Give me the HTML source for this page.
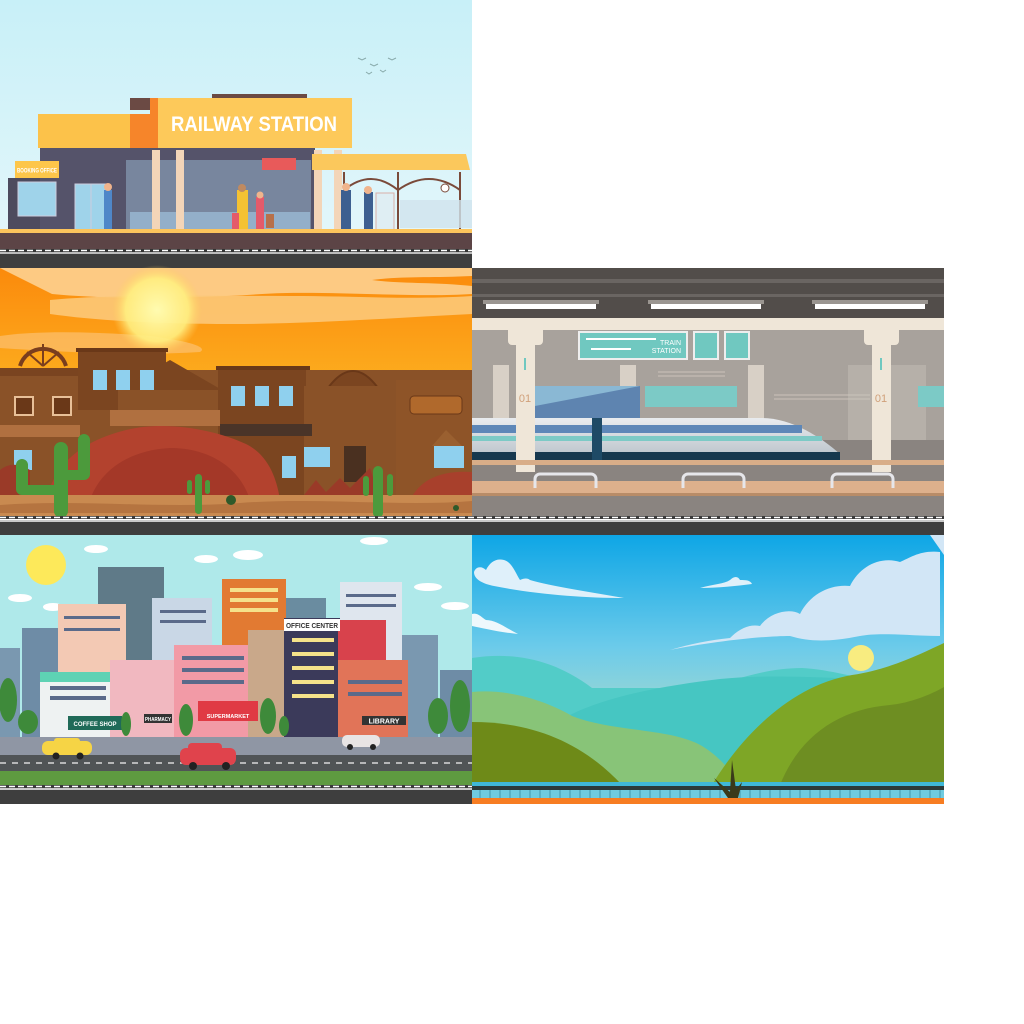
<!DOCTYPE html>
<html><head><meta charset="utf-8"><style>html,body{margin:0;padding:0;background:#fff;width:1024px;height:1024px;overflow:hidden}svg{display:block}</style></head><body>
<svg width="1024" height="1024" viewBox="0 0 1024 1024" xmlns="http://www.w3.org/2000/svg">
<defs>
<linearGradient id="s1" x1="0" y1="0" x2="0" y2="1"><stop offset="0" stop-color="#c8f0f8"/><stop offset="1" stop-color="#e2f6fa"/></linearGradient>
<linearGradient id="s2" x1="0" y1="0" x2="0" y2="1"><stop offset="0" stop-color="#fb8a0c"/><stop offset="0.5" stop-color="#fdb020"/><stop offset="1" stop-color="#ffd030"/></linearGradient>
<radialGradient id="sun2" cx="0.5" cy="0.5" r="0.5"><stop offset="0" stop-color="#fffbb0"/><stop offset="0.7" stop-color="#ffef80" stop-opacity="0.9"/><stop offset="1" stop-color="#ffd060" stop-opacity="0"/></radialGradient>
<linearGradient id="s5" x1="0" y1="0" x2="0" y2="1"><stop offset="0" stop-color="#0ea6e6"/><stop offset="0.45" stop-color="#6ccbea"/><stop offset="1" stop-color="#d2e6b8"/></linearGradient>
<linearGradient id="tr" x1="0" y1="0" x2="0" y2="1"><stop offset="0" stop-color="#e9ecef"/><stop offset="1" stop-color="#b7c0c8"/></linearGradient>
</defs>

<!-- PANEL 1 -->
<rect x="0" y="0" width="472" height="232" fill="url(#s1)"/>
<g fill="none" stroke="#8aa" stroke-width="1"><path d="M358 58l4 2 4-2M370 64l4 2 4-2M380 70l3 2 3-2M388 58l4 2 4-2M366 72l3 2 3-2"/></g>
<rect x="8" y="178" width="50" height="52" fill="#4d4b5e"/>
<rect x="40" y="146" width="275" height="85" fill="#55536a"/>
<rect x="126" y="160" width="185" height="70" fill="#7c8ca4" opacity="0.9"/>
<rect x="130" y="212" width="180" height="18" fill="#9ec0dc" opacity="0.7"/>
<rect x="18" y="182" width="38" height="34" fill="#9fd3ea" stroke="#ccd" stroke-width="1"/>
<rect x="15" y="161" width="44" height="17" fill="#fdc64a"/>
<text x="37" y="172.5" font-family="Liberation Sans" font-size="6.5" font-weight="bold" fill="#fff" text-anchor="middle" textLength="40" lengthAdjust="spacingAndGlyphs">BOOKING OFFICE</text>
<rect x="75" y="184" width="32" height="46" fill="#9fd3ea" stroke="#ccd"/>
<line x1="91" y1="184" x2="91" y2="230" stroke="#ccd"/>
<rect x="130" y="98" width="25" height="12" fill="#6b4a44"/>
<rect x="212" y="94" width="95" height="6" fill="#6b4a44"/>
<rect x="38" y="114" width="122" height="34" fill="#fcc24a"/>
<rect x="130" y="114" width="25" height="34" fill="#f6852a"/>
<rect x="150" y="98" width="202" height="50" fill="#fdc95a"/>
<rect x="150" y="98" width="8" height="50" fill="#f6852a"/>
<text x="254" y="131" font-family="Liberation Sans" font-size="21" font-weight="bold" fill="#fff" text-anchor="middle" textLength="166" lengthAdjust="spacingAndGlyphs">RAILWAY STATION</text>
<rect x="262" y="158" width="34" height="12" fill="#e85a5a"/>
<g fill="#f3d5b8"><rect x="152" y="150" width="8" height="80"/><rect x="176" y="150" width="8" height="80"/><rect x="314" y="150" width="8" height="80"/><rect x="334" y="150" width="8" height="80"/></g>
<path d="M312 154h154l4 16H312z" fill="#fbc85c"/>
<g fill="none" stroke="#7a4a3a" stroke-width="2"><path d="M344 172v58M398 172v58M460 172v58M344 190q27-22 54 0M398 190q31-22 62 0"/></g>
<rect x="400" y="200" width="72" height="28" fill="#cfe3ee" opacity="0.8"/>
<rect x="376" y="193" width="18" height="37" fill="#dfeef3" stroke="#d8b0a8"/>
<circle cx="445" cy="188" r="4" fill="#fff" stroke="#7a4a3a"/>
<g><rect x="104" y="190" width="8" height="40" fill="#4f87c8"/><circle cx="108" cy="187" r="4" fill="#f0b48c"/>
<rect x="237" y="190" width="11" height="40" fill="#f4c233"/><circle cx="242" cy="188" r="4" fill="#c08a60"/>
<rect x="256" y="197" width="8" height="33" fill="#e45a6a"/><circle cx="260" cy="195" r="3.5" fill="#f0b48c"/>
<rect x="232" y="213" width="7" height="17" fill="#e45a6a"/><rect x="266" y="214" width="8" height="14" fill="#b7704a"/>
<rect x="341" y="190" width="10" height="40" fill="#3d5f90"/><circle cx="346" cy="187" r="4" fill="#f0b48c"/>
<rect x="364" y="192" width="9" height="38" fill="#3d5f90"/><circle cx="368" cy="190" r="4" fill="#f0b48c"/></g>
<rect x="0" y="229" width="472" height="4" fill="#fcc45c"/>
<rect x="0" y="233" width="472" height="16" fill="#5c4446"/>
<rect x="0" y="249" width="472" height="3" fill="#333"/>
<line x1="0" y1="250.5" x2="472" y2="250.5" stroke="#fff" stroke-width="1.5" stroke-dasharray="6 3"/>
<rect x="0" y="252" width="472" height="2" fill="#bbb"/>
<rect x="0" y="254" width="472" height="14" fill="#3e3e3e"/>

<!-- PANEL 2 -->
<rect x="0" y="268" width="472" height="250" fill="url(#s2)"/>
<path d="M0 268h472v8c-40 2-70 0-100 4 30 4 60 2 100 6v8c-60 4-150-4-210 0-60 4-150 6-210 0z" fill="#fdd090" opacity="0.9"/>
<path d="M50 300c60-6 150-4 240-4 70 0 120 4 182 0v18c-80 4-160 10-240 10s-140-4-182-10z" fill="#fcc878" opacity="0.9"/>
<path d="M0 336c40-6 100-4 150 0 30 4 60 10 50 16-60 4-140 0-200-4z" fill="#fcc070" opacity="0.7"/>
<circle cx="157" cy="310" r="45" fill="url(#sun2)"/>
<!-- buildings -->
<rect x="0" y="370" width="472" height="130" fill="#8a5228"/>
<g fill="none" stroke="#7a3e1e" stroke-width="4"><path d="M20 366a24 24 0 0 1 46 0"/></g>
<g stroke="#7a3e1e" stroke-width="2"><path d="M43 344v22M43 366l-16-14M43 366l16-14"/></g>
<rect x="0" y="368" width="95" height="8" fill="#7a4420"/>
<rect x="78" y="350" width="88" height="60" fill="#7b4520"/>
<rect x="76" y="348" width="92" height="4" fill="#6a3818"/>
<path d="M118 390l52-30 52 30z" fill="#7b4520"/>
<rect x="118" y="390" width="104" height="24" fill="#8a5228"/>
<rect x="216" y="366" width="94" height="4" fill="#6a3818"/>
<rect x="218" y="370" width="88" height="130" fill="#7b4520"/>
<path d="M328 388q25-34 50 0z" fill="#7b4520" stroke="#6a3818" stroke-width="2"/>
<rect x="304" y="386" width="92" height="114" fill="#8a5228"/>
<rect x="396" y="380" width="76" height="120" fill="#8e5428"/>
<rect x="410" y="396" width="52" height="18" rx="4" fill="#b0692c" stroke="#6a3818"/>
<rect x="0" y="425" width="80" height="12" fill="#b07040"/>
<rect x="110" y="410" width="110" height="16" fill="#b07040"/>
<rect x="220" y="424" width="92" height="12" fill="#4a3428"/>
<g fill="#e8c098"><rect x="14" y="396" width="20" height="20"/><rect x="52" y="396" width="20" height="20"/></g>
<g fill="#6a3818"><rect x="16" y="398" width="16" height="16"/><rect x="54" y="398" width="16" height="16"/></g>
<g fill="#8fd0ee"><rect x="93" y="370" width="14" height="20"/><rect x="116" y="370" width="14" height="20"/><rect x="140" y="370" width="14" height="20"/><rect x="231" y="386" width="14" height="20"/><rect x="255" y="386" width="14" height="20"/><rect x="279" y="386" width="14" height="20"/><rect x="282" y="456" width="14" height="22"/><rect x="304" y="447" width="26" height="20"/><rect x="434" y="446" width="30" height="22"/><rect x="14" y="450" width="18" height="20"/></g>
<rect x="344" y="446" width="22" height="36" fill="#4a3020"/>
<path d="M432 446l14-16 16 16z" fill="#9a6030"/>
<!-- rocks -->
<path d="M46 500c10-40 40-60 80-70 40-10 90 0 120 14 20 10 30 30 34 56z" fill="#b3422e"/>
<path d="M90 500c10-30 40-50 80-52 40 0 70 20 80 52z" fill="#9a3224" opacity="0.6"/>
<path d="M0 500v-30c10-8 20-6 30 0v30z" fill="#9a3a28"/>
<path d="M300 500l16-20 10 12 14-14 10 10 20-20 10 32z" fill="#9a3a28"/>
<path d="M410 500c10-20 30-30 62-28v28z" fill="#a8402c"/>
<rect x="0" y="495" width="472" height="22" fill="#c98a50"/>
<path d="M0 505c80-6 160 4 240-2s160 4 232-2v12H0z" fill="#b57440"/>
<g fill="#4c9a3c"><rect x="54" y="442" width="14" height="76" rx="7"/><path d="M16 465a6 6 0 0 1 12 0v20h26v10H22a6 6 0 0 1-6-6z"/><path d="M68 470h10v-30a6 6 0 0 1 12 0v34a6 6 0 0 1-6 6H68z"/>
<rect x="195" y="474" width="7" height="40" rx="3.5"/><rect x="187" y="480" width="5" height="14" rx="2.5"/><rect x="205" y="480" width="5" height="14" rx="2.5"/>
<rect x="373" y="466" width="10" height="52" rx="5"/><rect x="363" y="476" width="6" height="20" rx="3"/><rect x="387" y="474" width="6" height="22" rx="3"/></g>
<g fill="#2f5a2a"><circle cx="231" cy="500" r="5"/><circle cx="456" cy="508" r="3"/></g>
<rect x="0" y="516" width="944" height="3" fill="#3a3a3a"/>
<line x1="0" y1="517.5" x2="944" y2="517.5" stroke="#fff" stroke-width="1.5" stroke-dasharray="6 3"/>
<rect x="0" y="520" width="944" height="2" fill="#c8c8c8"/>
<rect x="0" y="522" width="944" height="13" fill="#3e3e3e"/>

<!-- PANEL 3 -->
<rect x="472" y="268" width="472" height="248" fill="#8a8480"/>
<rect x="472" y="268" width="472" height="50" fill="#524d4a"/>
<rect x="472" y="279" width="472" height="4" fill="#6a6562"/>
<rect x="472" y="294" width="472" height="3" fill="#6a6562"/>
<g fill="#9a9590"><rect x="483" y="300" width="116" height="4"/><rect x="648" y="300" width="116" height="4"/><rect x="812" y="300" width="116" height="4"/></g>
<g fill="#fff"><rect x="486" y="304" width="110" height="5"/><rect x="651" y="304" width="110" height="5"/><rect x="815" y="304" width="110" height="5"/></g>
<rect x="472" y="318" width="472" height="12" fill="#efe6d8"/>
<rect x="472" y="330" width="472" height="110" fill="#a8a29c"/>
<g fill="#d8d0c6"><rect x="493" y="365" width="16" height="75"/><rect x="620" y="365" width="16" height="75"/><rect x="748" y="365" width="16" height="75"/><rect x="848" y="365" width="78" height="75" opacity="0.3"/></g>
<path d="M535 386h105v34H535z" fill="#5e84b0"/><path d="M535 386h105l-105 20z" fill="#8ab8d4"/>
<rect x="645" y="386" width="92" height="21" fill="#7ccac6"/>
<rect x="918" y="386" width="26" height="21" fill="#7ccac6"/>
<g stroke="#cbc3ba" stroke-width="1"><line x1="658" y1="372" x2="725" y2="372"/><line x1="658" y1="376" x2="725" y2="376"/><line x1="774" y1="395" x2="870" y2="395"/><line x1="774" y1="399" x2="870" y2="399"/></g>
<rect x="579" y="332" width="108" height="27" fill="#70c8c0" stroke="#eee" stroke-width="2"/>
<rect x="694" y="332" width="24" height="27" fill="#70c8c0" stroke="#eee" stroke-width="2"/>
<rect x="725" y="332" width="24" height="27" fill="#70c8c0" stroke="#eee" stroke-width="2"/>
<rect x="586" y="338" width="70" height="2" fill="#fff"/><rect x="591" y="348" width="40" height="2" fill="#fff"/>
<text x="681" y="345" font-family="Liberation Sans" font-size="7" fill="#fff" text-anchor="end">TRAIN</text>
<text x="681" y="353" font-family="Liberation Sans" font-size="7" fill="#fff" text-anchor="end">STATION</text>
<path d="M472 418h290c30 0 60 20 78 36v6H472z" fill="url(#tr)"/>
<rect x="472" y="425" width="330" height="8" fill="#5d87b8"/>
<rect x="472" y="436" width="350" height="5" fill="#7ccac6"/>
<rect x="472" y="452" width="368" height="8" fill="#16384e"/>
<rect x="592" y="418" width="10" height="42" fill="#1e4a66"/>
<g><rect x="508" y="325" width="35" height="20" rx="4" fill="#efe6d8"/><rect x="516" y="345" width="19" height="127" fill="#efe6d8"/>
<rect x="864" y="325" width="35" height="20" rx="4" fill="#efe6d8"/><rect x="872" y="345" width="19" height="127" fill="#efe6d8"/></g>
<text x="525" y="402" font-family="Liberation Sans" font-size="11" fill="#d0a07a" text-anchor="middle">01</text>
<text x="881" y="402" font-family="Liberation Sans" font-size="11" fill="#d0a07a" text-anchor="middle">01</text>
<g fill="#70c8c0"><rect x="524" y="358" width="2" height="12"/><rect x="880" y="358" width="2" height="12"/></g>
<rect x="472" y="460" width="472" height="5" fill="#d8ad88"/>
<rect x="472" y="481" width="472" height="12" fill="#ddb08c"/>
<rect x="472" y="493" width="472" height="3" fill="#b88c68"/>
<g fill="none" stroke="#e6e6ea" stroke-width="3"><path d="M535 488v-9a5 5 0 0 1 5-5h51a5 5 0 0 1 5 5v9M683 488v-9a5 5 0 0 1 5-5h51a5 5 0 0 1 5 5v9M832 488v-9a5 5 0 0 1 5-5h51a5 5 0 0 1 5 5v9"/></g>

<!-- PANEL 4 -->
<rect x="0" y="535" width="472" height="220" fill="#afe9ea"/>
<circle cx="46" cy="565" r="20" fill="#fde95a"/>
<g fill="#fff"><ellipse cx="53" cy="607" rx="10" ry="4"/><ellipse cx="96" cy="549" rx="12" ry="4"/><ellipse cx="137" cy="617" rx="13" ry="5"/><ellipse cx="206" cy="559" rx="12" ry="4"/><ellipse cx="248" cy="555" rx="15" ry="5"/><ellipse cx="374" cy="541" rx="14" ry="4"/><ellipse cx="428" cy="587" rx="14" ry="4"/><ellipse cx="455" cy="606" rx="14" ry="4"/><ellipse cx="20" cy="598" rx="12" ry="4"/></g>
<g>
<rect x="0" y="648" width="20" height="90" fill="#7a98b0"/>
<rect x="22" y="628" width="40" height="110" fill="#6e8ca6"/>
<rect x="98" y="567" width="66" height="170" fill="#5f7a88"/>
<rect x="58" y="604" width="68" height="134" fill="#f3c9b4"/>
<rect x="152" y="598" width="60" height="140" fill="#c9d7e6"/>
<rect x="222" y="579" width="64" height="160" fill="#e27a32"/>
<rect x="286" y="598" width="40" height="140" fill="#6a8ca0"/>
<rect x="340" y="582" width="62" height="156" fill="#dfe6ee"/>
<rect x="402" y="635" width="36" height="103" fill="#7a98b0"/>
<rect x="440" y="670" width="32" height="68" fill="#6e8ca6"/>
<rect x="40" y="672" width="76" height="66" fill="#eef2f2"/>
<rect x="40" y="672" width="76" height="10" fill="#5ed2b4"/>
<rect x="110" y="660" width="70" height="78" fill="#f1b8c0"/>
<rect x="174" y="645" width="78" height="93" fill="#f29aa6"/>
<rect x="248" y="630" width="40" height="108" fill="#c9a88a"/>
<rect x="284" y="618" width="56" height="120" fill="#3b3a5a"/>
<rect x="338" y="620" width="48" height="60" fill="#d8424c"/>
<rect x="338" y="660" width="70" height="78" fill="#e17458"/>
</g>
<g fill="#f5e28a"><rect x="230" y="588" width="48" height="4"/><rect x="230" y="598" width="48" height="4"/><rect x="230" y="608" width="48" height="4"/><rect x="292" y="638" width="42" height="4"/><rect x="292" y="652" width="42" height="4"/><rect x="292" y="666" width="42" height="4"/><rect x="292" y="680" width="42" height="4"/><rect x="292" y="694" width="42" height="4"/></g>
<g fill="#5a6a8a"><rect x="50" y="686" width="56" height="4"/><rect x="50" y="696" width="56" height="4"/><rect x="182" y="656" width="62" height="4"/><rect x="182" y="668" width="62" height="4"/><rect x="182" y="680" width="62" height="4"/><rect x="348" y="680" width="54" height="4"/><rect x="348" y="692" width="54" height="4"/><rect x="160" y="610" width="46" height="3"/><rect x="160" y="620" width="46" height="3"/><rect x="346" y="594" width="50" height="3"/><rect x="346" y="604" width="50" height="3"/><rect x="64" y="616" width="56" height="3"/><rect x="64" y="628" width="56" height="3"/></g>
<rect x="284" y="619" width="56" height="12" fill="#fff"/><text x="312" y="628" font-family="Liberation Sans" font-size="7" font-weight="bold" fill="#333" text-anchor="middle" textLength="52" lengthAdjust="spacingAndGlyphs">OFFICE CENTER</text>
<rect x="68" y="716" width="54" height="14" fill="#1f6a58"/><text x="95" y="726" font-family="Liberation Sans" font-size="6" font-weight="bold" fill="#fff" text-anchor="middle">COFFEE SHOP</text>
<rect x="144" y="714" width="28" height="9" fill="#333"/><text x="158" y="721" font-family="Liberation Sans" font-size="5.5" font-weight="bold" fill="#fff" text-anchor="middle" textLength="26" lengthAdjust="spacingAndGlyphs">PHARMACY</text>
<rect x="198" y="701" width="60" height="20" fill="#e03a44"/><text x="228" y="718" font-family="Liberation Sans" font-size="5.5" font-weight="bold" fill="#fff" text-anchor="middle">SUPERMARKET</text>
<rect x="362" y="716" width="44" height="9" fill="#333"/><text x="384" y="723.5" font-family="Liberation Sans" font-size="7" font-weight="bold" fill="#fff" text-anchor="middle">LIBRARY</text>
<g fill="#3e8a3a"><ellipse cx="8" cy="700" rx="9" ry="22"/><ellipse cx="28" cy="722" rx="10" ry="12"/><ellipse cx="126" cy="724" rx="5" ry="12"/><ellipse cx="186" cy="720" rx="7" ry="16"/><ellipse cx="268" cy="716" rx="8" ry="18"/><ellipse cx="284" cy="726" rx="5" ry="10"/><ellipse cx="438" cy="716" rx="10" ry="18"/><ellipse cx="460" cy="706" rx="10" ry="26"/></g>
<rect x="0" y="737" width="472" height="18" fill="#8f96a4"/>
<rect x="0" y="755" width="472" height="16" fill="#505456"/>
<line x1="0" y1="763" x2="472" y2="763" stroke="#d8d8d8" stroke-width="1.5" stroke-dasharray="6 6"/>
<rect x="0" y="771" width="472" height="15" fill="#5e9a40"/>
<rect x="42" y="741" width="50" height="14" rx="6" fill="#f6d445"/><rect x="54" y="738" width="26" height="8" rx="3" fill="#f6d445"/>
<circle cx="56" cy="756" r="3.5" fill="#222"/><circle cx="80" cy="756" r="3.5" fill="#222"/>
<rect x="180" y="748" width="56" height="17" rx="6" fill="#e0434c"/><rect x="188" y="743" width="34" height="10" rx="4" fill="#e0434c"/>
<circle cx="193" cy="766" r="4" fill="#222"/><circle cx="226" cy="766" r="4" fill="#222"/>
<rect x="342" y="735" width="38" height="12" rx="5" fill="#e8e4e4"/>
<circle cx="350" cy="747" r="3" fill="#222"/><circle cx="373" cy="747" r="3" fill="#222"/>
<rect x="0" y="785" width="472" height="3" fill="#3a3a3a"/>
<line x1="0" y1="786.5" x2="472" y2="786.5" stroke="#fff" stroke-width="1.5" stroke-dasharray="6 3"/>
<rect x="0" y="788" width="472" height="2" fill="#c8c8c8"/>
<rect x="0" y="790" width="472" height="14" fill="#3e3e3e"/>

<!-- PANEL 5 -->
<rect x="472" y="535" width="472" height="250" fill="url(#s5)"/>
<path d="M474 572c2-6 8-6 12-2 4-8 10-12 18-10 8 2 12 14 16 20 4-2 8-2 10 0 20 6 60 12 94 18-40 0-90-4-130-12-10-2-20-6-20-14z" fill="#dff0fa"/>
<path d="M472 614c6-2 10 4 14 6 10 0 20 8 32 14-20-2-36-6-46-8z" fill="#eef8fc"/>
<path d="M700 588c14-4 24-4 30-8 4-4 8-4 10 0 6 0 10 0 12 4-16 2-34 4-52 4z" fill="#dff0fa"/>
<path d="M670 650c20-6 40-10 60-12 10-10 20-14 30-12 10-14 30-18 40-12 10-20 30-30 50-28 10-20 30-30 50-24 10-4 20-12 40-10v84c-30 0-60-4-80 0-30 6-50 6-70 0-30 0-80 6-120 14z" fill="#d2e6f6"/>
<path d="M930 535l14 20v-20z" fill="#d2e6f6"/>
<circle cx="861" cy="658" r="13" fill="#f8ec80"/>
<path d="M472 658c40-6 80 0 120 30l110 0c30-6 60-20 100-20 40 2 80 20 132 16v100H472z" fill="#52ccc8"/>
<path d="M570 715c40-20 100-30 150-36 60-6 130 0 224 4v102H570z" fill="#46c6c2"/>
<path d="M472 692c40-4 80 12 100 24 40 16 100 12 130 30 20 12 30 28 40 39H472z" fill="#88c478"/>
<path d="M472 722c60 0 110 20 150 63H472z" fill="#6e8a18"/>
<path d="M712 785c30-50 80-100 140-110 40-6 70-22 92-32v142z" fill="#7ea626"/>
<path d="M780 785c20-50 60-76 110-80 20-2 40-10 54-18v98z" fill="#6e8e22"/>
<rect x="472" y="782" width="472" height="4" fill="#3fb8d8"/>
<rect x="472" y="786" width="472" height="4" fill="#2c3a3a"/>
<rect x="472" y="790" width="472" height="8" fill="#6fcbe0"/>
<g stroke="#3c8aa0" stroke-width="0.8"><path d="M480 790v8M490 790v8M500 790v8M510 790v8M520 790v8M530 790v8M540 790v8M550 790v8M560 790v8M570 790v8M580 790v8M590 790v8M600 790v8M610 790v8M620 790v8M630 790v8M640 790v8M650 790v8M660 790v8M670 790v8M680 790v8M690 790v8M700 790v8M710 790v8M720 790v8M730 790v8M740 790v8M750 790v8M760 790v8M770 790v8M780 790v8M790 790v8M800 790v8M810 790v8M820 790v8M830 790v8M840 790v8M850 790v8M860 790v8M870 790v8M880 790v8M890 790v8M900 790v8M910 790v8M920 790v8M930 790v8M940 790v8"/></g>
<rect x="472" y="798" width="472" height="6" fill="#f77d22"/>
<path d="M728 798l-14-20 16 14 2-32 4 30 6-8-4 16z" fill="#3a3a1a"/>
</svg>
</body></html>
